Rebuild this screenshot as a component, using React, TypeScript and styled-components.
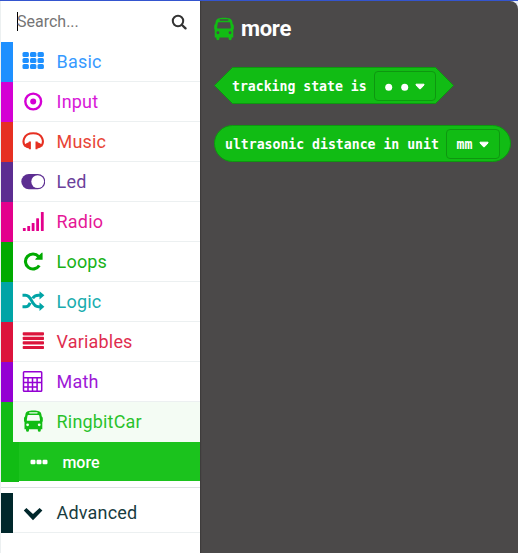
import React from "react";
import styled, { createGlobalStyle } from "styled-components";

const GlobalStyle = createGlobalStyle`
  * { box-sizing: border-box; }
  body { margin: 0; background: #fff; overflow: hidden; font-family: Roboto, "Liberation Sans", sans-serif; }
`;

const Editor = styled.div`
  width: 518px;
  height: 553px;
  display: flex;
  background: #e9eef8;
  border-top: 1px solid #3455cf;
`;

const Toolbox = styled.div`
  width: 200px;
  background: #fff;
  border-left: 1px solid #ecf0f1;
  display: flex;
  flex-direction: column;
`;

const SearchBar = styled.div`
  height: 41px;
  display: flex;
  align-items: center;
  padding: 0 13.5px 0 16px;
  justify-content: space-between;
`;

const SearchText = styled.div`
  border-left: 1px solid #000;
  height: 19px;
  line-height: 19px;
  font-size: 16px;
  text-indent: -1px;
  color: #757575;
`;

const Row = styled.div<{ $color: string; $selected?: boolean }>`
  height: 40px;
  display: flex;
  align-items: center;
  border-left: 12px solid ${(p) => p.$color};
  color: ${(p) => p.$color};
  background: ${(p) => (p.$selected ? "#f4fcf4" : "#fff")};
  box-shadow: inset 0 -1px 0 ${(p) => (p.$selected ? "#f4fcf4" : "#ecf0f1")};
  padding-left: 8px;
  gap: 11.6px;
  font-size: 18px;
`;

const RowLabel = styled.span`
  line-height: 40px;
  letter-spacing: 0.17px;
  opacity: 0.9;
`;

const SubRow = styled.div`
  height: 40px;
  display: flex;
  align-items: center;
  border-left: 18px solid #11bc14;
  background: linear-gradient(#1bc31d 39px, #fff 39px);
  color: #fff;
  padding-left: 11px;
  gap: 14.4px;
  font-size: 16px;
  font-weight: 500;
`;

const Divider = styled.div`
  height: 1px;
  margin: 5px 0;
  background: #dde1e2;
`;

const Flyout = styled.div`
  flex: 1;
  background: #4b4949;
  border-top-right-radius: 8px;
  box-shadow: inset 2px 0 1px -1px #3d3b3b;
  padding: 16px 0 0 14px;
`;

const Heading = styled.div`
  display: flex;
  align-items: center;
  gap: 7px;
  height: 24px;
  margin-bottom: 26px;
  color: #11bc14;
`;

const HeadingText = styled.span`
  color: #fff;
  font-size: 22px;
  font-weight: 700;
  line-height: 24px;
  letter-spacing: -0.3px;
`;

const Block = styled.div<{ $width: number; $pill?: boolean }>`
  position: relative;
  display: flex;
  align-items: center;
  justify-content: space-between;
  width: ${(p) => p.$width}px;
  height: 37px;
  margin-bottom: 21px;
  padding: ${(p) => (p.$pill ? "0 11px 0 11px" : "0 18px 0 18px")};
  color: #fff;
  font: bold 13.2px "DejaVu Sans Mono", monospace;
  white-space: pre;
`;

const BlockShape = styled.svg`
  position: absolute;
  left: 0;
  top: 0;
`;

const BlockText = styled.span`
  position: relative;
  padding-top: 2px;
  letter-spacing: -0.02px;
`;

const Field = styled.div<{ $width: number; $gap: number }>`
  position: relative;
  width: ${(p) => p.$width}px;
  height: 30px;
  border: 1px solid #0e9710;
  border-radius: 4px;
  display: flex;
  align-items: center;
  justify-content: center;
  gap: ${(p) => p.$gap}px;
  padding-top: 2px;
`;

const Caret = () => (
  <svg width="10" height="8" viewBox="0 0 10 8">
    <path d="M1 1.2h8v.8L5.6 5.7q-.6.6-1.2 0L1 2z" fill="#fff" stroke="#fff" strokeLinejoin="round" />
  </svg>
);

const Dots = () => (
  <svg width="24" height="8" viewBox="0 0 24 8">
    <circle cx="3.7" cy="4.3" r="3.5" fill="#fff" />
    <circle cx="19.7" cy="4.3" r="3.5" fill="#fff" />
  </svg>
);

const Icon = ({ children }: { children: React.ReactNode }) => (
  <svg width="24" height="24" viewBox="0 0 24 24" fill="currentColor">{children}</svg>
);

const Bus = () => (
  <path
    fillRule="evenodd"
    d="M12.4.6C7.6.6 5 1.6 4.5 4L4 6.6Q3 7 3 8.4V11.2L3.5 12V19.2H5v1a1.5 1.5 0 0 0 3 0v-1h8.8v1a1.5 1.5 0 0 0 3 0v-1h1.5V12l.5-.8V8.4Q21.800 7 20.8 6.600L20.300 4C19.8 1.600 17.200.6 12.400.6zM8.700 2.200h7.400a.6.6 0 0 1 0 1.200H8.700a.6.6 0 0 1 0-1.200zM7.400 5h10q.8 0 .9.7l.7 4.200q.1.900-.8.900H6.600q-.9 0-.8-.9l.7-4.200q.1-.7.900-.7zM6.600 13.400a1.400 1.400 0 1 1 0 2.800 1.400 1.400 0 0 1 0-2.800zM18.200 13.400a1.400 1.400 0 1 1 0 2.800 1.400 1.400 0 0 1 0-2.800z"
  />
);

const icons: Record<string, React.ReactNode> = {
  Basic: [2, 8, 14].map((y) =>
    [1.5, 9, 16.5].map((x) => <rect key={`${x}-${y}`} x={x} y={y} width="6.4" height="5" rx="1.5" />)
  ),
  Input: (
    <>
      <circle cx="12.2" cy="11.5" r="7.9" fill="none" stroke="currentColor" strokeWidth="2.4" />
      <circle cx="12.2" cy="11.5" r="3" />
    </>
  ),
  Music: (
    <>
      <path d="M4.1 16C1.2 12.500 1.800 3.200 12.200 3.200S23.200 12.500 20.300 16" fill="none" stroke="currentColor" strokeWidth="2.1" />
      <path d="M3.200 14.800Q5.500 12.800 7.800 12.300V11.400H9.900V19.200H8V18.400Q5 18 3.500 16.400zM21.200 14.800Q18.900 12.800 16.600 12.300V11.400H14.500V19.200H16.400V18.400Q19.400 18 20.900 16.400z" />
    </>
  ),
  Led: (
    <>
      <rect x=".3" y="4" width="24" height="15.2" rx="7.6" />
      <circle cx="16.7" cy="11.6" r="6.4" fill="#fff" />
    </>
  ),
  Radio: (
    <>
      <rect x="1.9" y="18" width="2.8" height="3" rx=".5" />
      <rect x="6.300" y="16" width="2.8" height="5" rx=".5" />
      <rect x="10.7" y="13" width="2.8" height="8" rx=".5" />
      <rect x="15.2" y="8.2" width="2.8" height="12.8" rx=".5" />
      <rect x="19.9" y="2" width="2.8" height="19" rx=".5" />
    </>
  ),
  Loops: (
    <>
      <path d="M18.3 15.5A7.5 7.5 0 1 1 17.6 6.500" fill="none" stroke="currentColor" strokeWidth="3.1" />
      <path d="M21.6 3.5V9.8H15q-1.3 0-.4-1.1l5.8-5.8q1.2-.8 1.2.6z" />
    </>
  ),
  Logic: (
    <>
      <path
        d="M1.5 5.2H4.5C11.5 5.2 10 16.8 17.5 16.8H19.5M1.5 16.8H4.5C7 16.8 8.2 15 9.2 12.8M11.7 8.4C12.8 6.4 14.4 5.2 17.5 5.2H19.5"
        fill="none"
        stroke="currentColor"
        strokeWidth="3"
      />
      <path d="M18.5 1.3 23.4 5.2 18.500 9.400zM18.500 12.600 23.400 16.800 18.500 20.900z" />
    </>
  ),
  Variables: [2.2, 6.8, 11.3, 15.9].map((y) => <rect key={y} x="1.7" y={y} width="21.3" height="3.2" rx=".8" />),
  Math: (
    <g fill="none" stroke="currentColor" strokeWidth="1.5">
      <rect x="2.5" y="1.7" width="18.2" height="19.6" rx=".8" />
      <path d="M2.5 7.800H20.7M2.500 12.400H20.700M2.500 16.900H16M7 7.800V21M11.500 7.800V21M16.100 7.800V21" />
    </g>
  ),
  RingbitCar: <Bus />,
  Advanced: <path d="M2.8 9.5 5.4 7 12 13 18.6 7 21.4 9.5 12 19.2z" />,
};

const categories: [string, string][] = [
  ["Basic", "#1e90ff"],
  ["Input", "#d400d4"],
  ["Music", "#e63022"],
  ["Led", "#5c2d91"],
  ["Radio", "#e3008c"],
  ["Loops", "#00aa00"],
  ["Logic", "#00a4a6"],
  ["Variables", "#dc143c"],
  ["Math", "#9400d3"],
  ["RingbitCar", "#11bc14"],
];

const Category = ({ name, color }: { name: string; color: string }) => (
  <Row $color={color} $selected={name === "RingbitCar"}>
    <Icon>{icons[name]}</Icon>
    <RowLabel>{name}</RowLabel>
  </Row>
);

export default function App() {
  return (
    <>
      <GlobalStyle />
      <Editor>
        <Toolbox>
          <SearchBar>
            <SearchText>Search...</SearchText>
            <svg width="16" height="16" viewBox="0 0 16 16" fill="none" stroke="#333" strokeLinecap="round">
              <circle cx="7" cy="7" r="5.2" strokeWidth="2" />
              <path d="m11 11 3.5 3.4" strokeWidth="2.3" />
            </svg>
          </SearchBar>
          {categories.map(([name, color]) => (
            <Category key={name} name={name} color={color} />
          ))}
          <SubRow>
            <svg width="18" height="6" viewBox="0 0 18 6" fill="#fff">
              <rect x=".5" y=".8" width="5" height="4.5" rx="1.2" />
              <rect x="6.5" y=".8" width="5" height="4.5" rx="1.2" />
              <rect x="12.5" y=".8" width="5" height="4.5" rx="1.2" />
            </svg>
            <span>more</span>
          </SubRow>
          <Divider />
          <Category name="Advanced" color="#00272b" />
        </Toolbox>
        <Flyout>
          <Heading>
            <svg width="20" height="24" viewBox="2.8 0 19.2 22.5" fill="currentColor" preserveAspectRatio="none">
              <Bus />
            </svg>
            <HeadingText>more</HeadingText>
          </Heading>
          <Block $width={240}>
            <BlockShape width="240" height="37" viewBox="0 0 240 37">
              <path d="M18.5.5H221.5L239.5 18.5 221.5 36.5H18.5L.5 18.5z" fill="#11bc14" stroke="#0e9710" />
            </BlockShape>
            <BlockText>tracking state is</BlockText>
            <Field $width={62} $gap={6}>
              <Dots />
              <Caret />
            </Field>
          </Block>
          <Block $width={297} $pill>
            <BlockShape width="297" height="37" viewBox="0 0 297 37">
              <rect x=".5" y=".5" width="296" height="36" rx="18" fill="#11bc14" stroke="#0e9710" />
            </BlockShape>
            <BlockText>ultrasonic distance in unit</BlockText>
            <Field $width={54} $gap={7}>
              <span>mm</span>
              <Caret />
            </Field>
          </Block>
        </Flyout>
      </Editor>
    </>
  );
}
